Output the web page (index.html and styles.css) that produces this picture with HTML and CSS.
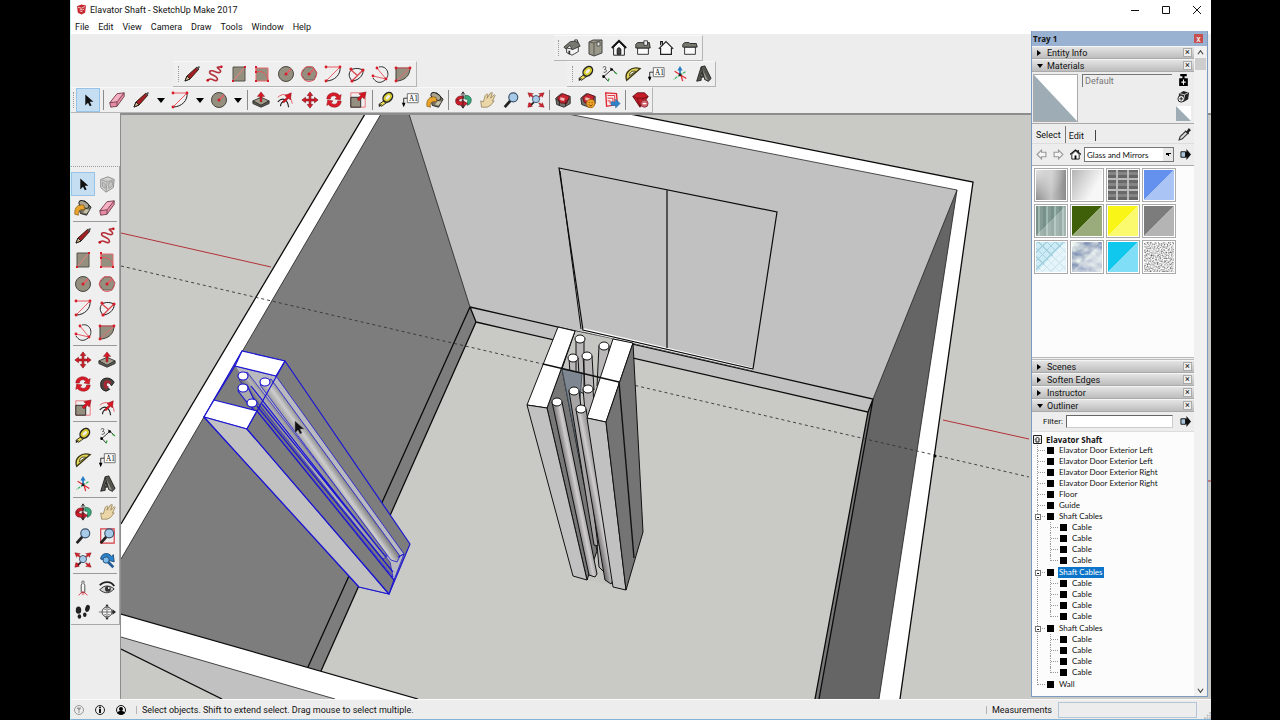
FILE: index.html
```html
<!DOCTYPE html>
<html lang="en">
<head>
<meta charset="utf-8">
<title>Elavator Shaft - SketchUp Make 2017</title>
<link rel="stylesheet" href="styles.css">
</head>
<body>
<svg class="sprite" aria-hidden="true">
  <symbol id="select" viewBox="0 0 20 20"><path d="M7 4v12l3-3 2 4 2-1-2-4h4z" fill="#111"/></symbol>
  <symbol id="eraser" viewBox="0 0 20 20"><path d="M2 13 10 3l8-1v4l-8 11-7 1z" fill="#e58ca4" stroke="#71404d"/><path d="m2 13 8-1 8-10M10 12v5" fill="none" stroke="#71404d"/><path d="m10 4 6-1-6 8-6 1z" fill="#f5b1c4"/></symbol>
  <symbol id="pencil" viewBox="1 1 18 18"><path d="m3 17 2-5L15 3l2 2L8 15z" fill="#a51e25" stroke="#321" /><path d="m3 17 2-5 3 3z" fill="#d9b98a" stroke="#222"/><path d="m14 4 3-2 1 1-2 3z" fill="#555"/></symbol>
  <symbol id="freehand" viewBox="0 0 20 20"><path d="M2 17c2-3 5-1 7 0s5 0 3-3-8-3-8-6 5-1 8 0 6 0 3-3-4-2 1-3" fill="none" stroke="#b5303a" stroke-width="1.8"/><circle cx="2" cy="17" r="1.5" fill="#c4101c"/><circle cx="17" cy="2" r="1.5" fill="#c4101c"/></symbol>
  <symbol id="rect" viewBox="1 1 18 18"><path d="M4 3h12v14H4z" fill="#948f7e" stroke="#55534a"/><path d="M4 17 16 3" stroke="#ef8080"/><path d="M3 16h2v2H3zM15 2h2v2h-2z" fill="#d91c2a"/></symbol>
  <symbol id="rrect" viewBox="1 1 18 18"><path d="M4 4h12v13H4z" fill="#948f7e" stroke="#e76b70"/><path d="M4 8c6-2 12 2 12 9M4 8V3" fill="none" stroke="#ee5360"/><path d="M3 2h2v2H3zM3 16h2v2H3zM15 16h2v2h-2zM3 7h2v2H3z" fill="#d91c2a"/></symbol>
  <symbol id="circle" viewBox="1 1 18 18"><circle cx="10" cy="10" r="7.5" fill="#948f7e" stroke="#48463d"/><path d="m10 10 5-5" stroke="#ee5964" stroke-width="1.5"/><circle cx="10" cy="10" r="1.5" fill="#d91c2a"/></symbol>
  <symbol id="polygon" viewBox="1 1 18 18"><path d="m7 3 7 0 4 6-3 7H6L2 10z" fill="#948f7e" stroke="#6b5b52"/><circle cx="10" cy="10" r="7.5" fill="none" stroke="#e05a62"/><path d="m10 10 5-5" stroke="#ee5964" stroke-width="1.5"/><circle cx="10" cy="10" r="1.5" fill="#d91c2a"/></symbol>
  <symbol id="arc" viewBox="1 1 18 18"><path d="M17 3c1 7-5 14-14 14" fill="none" stroke="#222"/><path d="M3 3h14L3 17" fill="none" stroke="#ea5a64"/><g fill="#d91c2a"><circle cx="3" cy="3" r="1.4"/><circle cx="17" cy="3" r="1.4"/><circle cx="3" cy="17" r="1.4"/></g></symbol>
  <symbol id="arc2" viewBox="1 1 18 18"><path d="M6 17C-1 9 6 1 17 6" fill="none" stroke="#222"/><path d="M6 17 17 6M5 6l7 6" fill="none" stroke="#d94751" stroke-width="1.4"/><path d="M17 6c1 6-6 11-11 11" fill="none" stroke="#222"/><g fill="#d91c2a"><circle cx="6" cy="17" r="1.6"/><circle cx="17" cy="6" r="1.6"/><circle cx="5" cy="5" r="1.6"/></g></symbol>
  <symbol id="arc3" viewBox="1 1 18 18"><path d="M9 3c8-2 12 8 6 13S5 17 3 14" fill="none" stroke="#333"/><path d="M7 4 16 15 3 12" fill="none" stroke="#e56069"/><g fill="#d91c2a"><circle cx="7" cy="4" r="1.4"/><circle cx="16" cy="15" r="1.4"/><circle cx="3" cy="12" r="1.4"/></g></symbol>
  <symbol id="pie" viewBox="1 1 18 18"><path d="M3 4h14c0 8-6 13-14 13z" fill="#948f7e" stroke="#413e36"/><path d="M3 4h14L3 17" fill="none" stroke="#ed6a73"/><g fill="#d91c2a"><circle cx="3" cy="4" r="1.4"/><circle cx="17" cy="4" r="1.4"/><circle cx="3" cy="17" r="1.4"/></g></symbol>
  <symbol id="pushpull" viewBox="0 0 20 20"><path d="m1 11 9-4 9 4-9 5z" fill="#a19c89" stroke="#333"/><path d="M1 11v3l9 4 9-4v-3l-9 5z" fill="#5c594d" stroke="#333"/><path d="M9 12V6H6l4-5 4 5h-3v6z" fill="#dc1825" stroke="#7d0b12" stroke-width=".5"/></symbol>
  <symbol id="offset" viewBox="0 0 20 20"><path d="M2 7C8 1 17 4 18 14" fill="none" stroke="#e5515b"/><path d="M2 12c6-6 11-2 12 6M5 17c0-3 2-5 4-6" fill="none" stroke="#222" stroke-width="1.3"/><path d="m7 12 5-5-2-2 7-3-1 8-2-2-5 5z" fill="#d71925" stroke="#800a13" stroke-width=".5"/></symbol>
  <symbol id="move" viewBox="0 0 20 20"><path d="m10 1 3 4h-2v4h4V7l4 3-4 3v-2h-4v4h2l-3 4-3-4h2v-4H5v2l-4-3 4-3v2h4V5H7z" fill="#d91b27" stroke="#7d1319" stroke-width=".7"/></symbol>
  <symbol id="rotate" viewBox="0 0 20 20"><path d="M2 9c0-8 11-9 14-4l2-1-1 6-6-1 2-2C11 4 6 5 6 9zM18 11c0 8-11 9-14 4l-2 1 1-6 6 1-2 2c2 3 7 2 7-2z" fill="#d91b27" stroke="#861019" stroke-width=".5"/></symbol>
  <symbol id="scale" viewBox="0 0 20 20"><path d="M2 2h16v16H2z" fill="none" stroke="#eb7078"/><path d="M2 7h11v11H2z" fill="#948f7e" stroke="#222"/><path d="m9 9 4-4-2-2 8-2-2 8-2-2-4 4z" fill="#d61723" stroke="#760d12" stroke-width=".5"/></symbol>
  <symbol id="follow" viewBox="0 0 20 20"><path d="M3 11C2 2 14 1 18 8l-3 4c-3-5-6-4-6 0l4 4-4 2c-4-1-6-3-6-7z" fill="#494642" stroke="#1c1a19"/><path d="M6 11c0-6 6-7 9-2l-2 1c-3-3-4-1-3 2l2 1-4 3z" fill="#a72733"/></symbol>
  <symbol id="tape" viewBox="0 0 20 20"><path d="m10 9-8 6 3 2 7-5" fill="#f0df52" stroke="#222"/><ellipse cx="12" cy="7" rx="6" ry="4.5" transform="rotate(-45 12 7)" fill="#d8cb30" stroke="#232323" stroke-width="1.6"/><ellipse cx="12" cy="7" rx="3" ry="1.6" transform="rotate(-45 12 7)" fill="#eee"/><path d="M2 15v3l4-3" fill="#222"/></symbol>
  <symbol id="dimension" viewBox="0 0 20 20"><path d="m4 13 9-8M3 11l6 7M11 3l7 6" stroke="#222" fill="none"/><path d="m10 15-1 3M16 8l3 2" stroke="#38a845" stroke-width="1.5"/><path d="M3 3c3-3 5 0 2 2 4 0 2 4-1 3" fill="none" stroke="#444"/><circle cx="4" cy="13" r="1.5"/><circle cx="13" cy="5" r="1.5"/></symbol>
  <symbol id="protractor" viewBox="0 0 20 20"><path d="M3 17C0 8 8 1 18 4z" fill="#e2d657" stroke="#3c3817" stroke-width="1.5"/><path d="M6 12c0-4 3-6 7-5z" fill="#f3f3ed" stroke="#3c3817"/></symbol>
  <symbol id="axes" viewBox="0 0 20 20"><path d="M10 12V4" stroke="#287fc7" stroke-width="2"/><path d="m7 6 3-5 3 5z" fill="#287fc7"/><path d="m10 11 7-4M10 11l-7 5" stroke="#3ab369" stroke-width="1.400" stroke-dasharray="3 1"/><path d="m4 7 13 8M11 11l2 7" stroke="#df2b38" stroke-width="1.4"/><circle cx="10" cy="11" r="1.5" fill="#222"/></symbol>
  <symbol id="text3d" viewBox="0 0 20 20"><path d="m8 2 4-1 7 14-3 3-4-2-1-3-3 1v3l-5 1z" fill="#555650" stroke="#1f201e"/><path d="m8 2 4 14 4 2M9 8l1 4-3 1z" fill="#a1a195" stroke="#282828"/></symbol>
  <symbol id="paint" viewBox="0 0 20 20"><path d="M5 8 12 2l7 7-5 9-7-2z" fill="#777262" stroke="#222"/><ellipse cx="11" cy="6" rx="6" ry="3.3" transform="rotate(30 11 6)" fill="#a9a490" stroke="#222"/><path d="M11 7C4 5 0 10 1 17l4 1c-1-5 2-7 7-6z" fill="#e9a52b" stroke="#80500b" stroke-width=".7"/><path d="m13 11 4 1-3 4-4-1z" fill="#c5c1a6"/></symbol>
  <symbol id="component" viewBox="0 0 20 20"><path d="m3 5 8-3 7 3-1 9-8 5-6-5z" fill="#d4d4d2" stroke="#888"/><path d="m3 5 7 3 8-3M10 8l-1 11M5 8l3 2v5l-3-2zM12 9l4-2v5l-4 3z" fill="#c9c9c9" stroke="#999"/></symbol>
  <symbol id="orbit" viewBox="0 0 20 20"><path d="M2 10c1-5 7-5 9-4l-1 3c-4-1-5 1-5 3z" fill="#d01d2b" stroke="#5e1016" stroke-width=".7"/><path d="M2 10c-1 5 3 6 7 6v2l6-4-6-4v2c-3 0-4-1-4-2z" fill="#d01d2b" stroke="#5e1016" stroke-width=".7"/><path d="M12 5c6-1 9 4 6 9l-3 2v-4c1-2 0-3-3-3z" fill="#35aa7b" stroke="#164d3a" stroke-width=".7"/><path d="M10 1v18M8 4l2-3 2 3M8 16l2 3 2-3" fill="none" stroke="#252525"/></symbol>
  <symbol id="pan" viewBox="0 0 20 20"><path d="m3 11 3 1 2-7 2-2 1 1-1 4 4-6 2 0-2 6 4-4 1 1-3 6 2 0-4 5-4 2H4z" fill="#ead6a7" stroke="#8b784f" stroke-width=".8"/></symbol>
  <symbol id="zoom" viewBox="0 0 20 20"><path d="m3 18 7-8" stroke="#222" stroke-width="3"/><circle cx="12.500" cy="7" r="5" fill="#a6cae8" stroke="#3e546b" stroke-width="1.3"/></symbol>
  <symbol id="zoomwin" viewBox="0 0 20 20"><path d="M3 2h15v16H3z" fill="none" stroke="#d73c47" stroke-width="1.300"/><path d="m3 18 7-8" stroke="#222" stroke-width="3"/><circle cx="12.500" cy="7" r="5" fill="#a6cae8" stroke="#3e546b" stroke-width="1.3"/></symbol>
  <symbol id="extents" viewBox="0 0 20 20"><path d="m3 17 5-5" stroke="#222" stroke-width="2"/><circle cx="10" cy="9" r="4" fill="#a6cae8" stroke="#3e546b"/><path d="m1 2 6 1-2 1 2 2-1 1-2-2-1 2zM19 2l-6 1 2 1-2 2 1 1 2-2 1 2zM1 18l5-1-2-2 1-1-3-1zM19 18l-6-1 2-1-2-2 1-1 2 2 1-2z" fill="#d5202a" stroke="#841016" stroke-width=".5"/></symbol>
  <symbol id="previous" viewBox="0 0 20 20"><path d="M3 9c0-7 9-8 12-3l2-2 1 8-8-2 2-2C9 5 7 7 8 10z" fill="#2984d0" stroke="#214a70"/><circle cx="9" cy="10" r="3.500" fill="#7dbbec" stroke="#214a70"/><path d="m11 12 6 6" stroke="#245b96" stroke-width="3"/></symbol>
  <symbol id="camera" viewBox="0 0 20 20"><path d="M8 15V7l1-2c-1-4 3-4 2 0l1 2v8z" fill="#f6f6f6" stroke="#444"/><path d="m5 18 5-4 5 4M10 14v4" fill="none" stroke="#dc3341"/></symbol>
  <symbol id="eye" viewBox="0 0 20 20"><path d="M2 7c4-5 13-5 16 1" fill="none" stroke="#222" stroke-width="2"/><path d="M2 12c5-6 11-5 16-1-5 5-10 6-16 1z" fill="#d2d2d2" stroke="#222"/><circle cx="11" cy="11" r="3.2" fill="#333"/><circle cx="12" cy="10" r="1" fill="#fff"/></symbol>
  <symbol id="walk" viewBox="0 0 20 20"><g fill="#222"><ellipse cx="5" cy="8" rx="3" ry="4"/><ellipse cx="6" cy="15" rx="2" ry="2.500"/><ellipse cx="15" cy="6" rx="2.500" ry="4" transform="rotate(15 15 6)"/><ellipse cx="12" cy="13" rx="2" ry="2.500"/></g></symbol>
  <symbol id="section" viewBox="0 0 20 20"><circle cx="10" cy="10" r="5.500" fill="#f5f5f5" stroke="#333"/><path d="M1 10h16M10 5v11M7 7h2M11 7h2M7 13h2M11 13h2" stroke="#666"/><path d="m16 7 4 3-4 3zM8 4l2-3 2 3zM8 16l2 3 2-3z" fill="#222"/></symbol>
  <symbol id="warehouse" viewBox="0 0 20 20"><path d="m2 8 6-5 10 3v8l-7 4-8-3z" fill="#73716a" stroke="#2b2929"/><path d="m4 7 6-4 7 3-3 8-8-1z" fill="#c52632" stroke="#701018"/><path d="m7 7 5 1-1 3-4-1z" fill="#f1bbb9"/><path d="m2 9 4 2v5M17 9l-4 3v5" fill="none" stroke="#222"/></symbol>
  <symbol id="share" viewBox="0 0 20 20"><path d="m2 8 6-5 10 3v8l-7 4-8-3z" fill="#73716a" stroke="#2b2929"/><path d="m4 7 6-4 7 3-3 8-8-1z" fill="#c52632" stroke="#701018"/><path d="m7 7 5 1-1 3-4-1z" fill="#f1bbb9"/><circle cx="13" cy="14" r="4.500" fill="#f3a52a" stroke="#a86411"/><path d="M11 13h1M14 13h1M11 15c1 2 3 2 4 0" stroke="#573508" fill="none"/></symbol>
  <symbol id="layout" viewBox="0 0 20 20"><path d="m3 2 12 1 1 12-12 2z" fill="#faeaea" stroke="#db2834" stroke-width="1.500"/><path d="M5 5h8v7M5 8h6v6M5 11h3v3" fill="none" stroke="#db2834"/><path d="M9 12h5V9l5 5-5 5v-3H9z" fill="#2d84ca" stroke="#205a8b" stroke-width=".5"/></symbol>
  <symbol id="ruby" viewBox="0 0 20 20"><path d="m2 6 5-4h8l4 4-5 8-4 4z" fill="#c61c28" stroke="#5d1116"/><path d="m2 6 5 2h7l5-2M7 8l3 9 4-9" fill="none" stroke="#731019"/><circle cx="15" cy="14" r="4" fill="#d5636d" stroke="#8d3039"/><path d="M13 14h4" stroke="#fff" stroke-width="1.500"/></symbol>
  <symbol id="iso" viewBox="0 0 20 20"><path d="m4 10 5 1 8-4v7l-7 4-6-3z" fill="#f5f5f5" stroke="#333"/><path d="m1 9 7-6 8-1 3 6-9 4-2-5-5 4z" fill="#77786f" stroke="#333"/><path d="M6 13h2v4H6z" fill="#333"/><path d="M13 2V1h3v3z" fill="#ddd" stroke="#333"/></symbol>
  <symbol id="top" viewBox="1 1 18 18"><path d="m4 4 4-2h9v13l-8 3-5-2z" fill="#999889" stroke="#444"/><path d="m4 4 5 1 8-3M9 5v12" fill="none" stroke="#5a594f"/><path d="M12 4h3v4h-3z" fill="#e7e7df" stroke="#555"/></symbol>
  <symbol id="front" viewBox="0 0 20 20"><path d="M4 9v9h12V9l-6-6z" fill="#f7f7f7" stroke="#111"/><path d="m2 10 8-8 8 8" fill="none" stroke="#111" stroke-width="2"/><path d="M8 17v-5c0-3 4-3 4 0v5z" fill="#444" stroke="#111"/></symbol>
  <symbol id="right" viewBox="0 0 20 20"><path d="M4 10h12v7H4z" fill="#fafafa" stroke="#222"/><path d="m2 6 2-2h13l1 6H2z" fill="#77786f" stroke="#222"/><path d="M11 2h4v5h-4z" fill="#eee" stroke="#333"/></symbol>
  <symbol id="back" viewBox="0 0 20 20"><path d="M4 9v8h12V9l-6-6z" fill="#fafafa"/><path d="m2 11 8-8 8 8M4 10v7h12v-7M4 7V3h2v3" fill="none" stroke="#222" stroke-width="1.300"/></symbol>
  <symbol id="left" viewBox="0 0 20 20"><path d="M4 9h12v8H4z" fill="#fafafa" stroke="#222"/><path d="m2 6 2-2h5l1 1h7l1 4H2z" fill="#77786f" stroke="#222"/></symbol>
  <symbol id="export" viewBox="0 0 12 12"><path d="M4 3h3V0l5 6-5 6V9H4z" fill="#111"/><path d="M1 3h5v6H1z" fill="#a9c4dd" stroke="#111"/></symbol>
</svg>

<div class="window">
  <header class="titlebar">
    <svg class="logo" viewBox="0 0 10 11"><path d="m0 2 5-2 5 1-1 8-4 2-4-2z" fill="#c4262e"/><path d="m1 3 4 1 4-2M3 5l3 1 2-1M3 7l3 1" fill="none" stroke="#fff" stroke-width=".8"/></svg>
    <h1>Elavator Shaft - SketchUp Make 2017</h1>
    <div class="controls">
      <button aria-label="Minimize"><svg viewBox="0 0 8 8"><path d="M0 4.500h8" stroke="#111"/></svg></button>
      <button aria-label="Maximize"><svg viewBox="0 0 8 8"><path d="M.5.5h7v7h-7z" fill="none" stroke="#111"/></svg></button>
      <button aria-label="Close"><svg viewBox="0 0 8 8"><path d="m0 0 8 8M8 0 0 8" stroke="#111"/></svg></button>
    </div>
  </header>
  <nav class="menu">
    <button>File</button><button>Edit</button><button>View</button><button>Camera</button><button>Draw</button><button>Tools</button><button>Window</button><button>Help</button>
  </nav>

  <div class="dock">
    <div class="dock-row">
      <div class="bar bar-views">
        <button aria-label="Iso"><svg><use href="#iso"/></svg></button><button aria-label="Top"><svg><use href="#top"/></svg></button><button aria-label="Front"><svg><use href="#front"/></svg></button><button aria-label="Right"><svg><use href="#right"/></svg></button><button aria-label="Back"><svg><use href="#back"/></svg></button><button aria-label="Left"><svg><use href="#left"/></svg></button>
      </div>
    </div>
    <div class="dock-row">
      <div class="bar bar-draw">
        <button aria-label="Line"><svg><use href="#pencil"/></svg></button><button aria-label="Freehand"><svg><use href="#freehand"/></svg></button><button aria-label="Rectangle"><svg><use href="#rect"/></svg></button><button aria-label="Rotated rectangle"><svg><use href="#rrect"/></svg></button><button aria-label="Circle"><svg><use href="#circle"/></svg></button><button aria-label="Polygon"><svg><use href="#polygon"/></svg></button><button aria-label="Arc"><svg><use href="#arc"/></svg></button><button aria-label="2 point arc"><svg><use href="#arc2"/></svg></button><button aria-label="3 point arc"><svg><use href="#arc3"/></svg></button><button aria-label="Pie"><svg><use href="#pie"/></svg></button>
      </div>
      <div class="bar bar-construct">
        <button aria-label="Tape measure"><svg><use href="#tape"/></svg></button><button aria-label="Dimension"><svg><use href="#dimension"/></svg></button><button aria-label="Protractor"><svg><use href="#protractor"/></svg></button><button aria-label="Text"><svg viewBox="0 0 20 20"><path d="M7 3h12v10H7z" fill="#fff" stroke="#666"/><path d="M7 8H3v8" fill="none" stroke="#222"/><path d="M1 13h4l-2 5z"/><text x="9" y="11" class="tag">A1</text></svg></button><button aria-label="Axes"><svg><use href="#axes"/></svg></button><button aria-label="3D text"><svg><use href="#text3d"/></svg></button>
      </div>
    </div>
    <div class="dock-row">
      <div class="bar bar-main">
        <button class="active" aria-label="Select"><svg><use href="#select"/></svg></button><i class="vsep"></i>
        <button aria-label="Eraser"><svg><use href="#eraser"/></svg></button><button aria-label="Line"><svg><use href="#pencil"/></svg></button><button class="drop" aria-label="Line tools"></button><button aria-label="Arc"><svg><use href="#arc"/></svg></button><button class="drop" aria-label="Arc tools"></button><button aria-label="Circle"><svg><use href="#circle"/></svg></button><button class="drop" aria-label="Shape tools"></button><i class="vsep"></i>
        <button aria-label="Push/Pull"><svg><use href="#pushpull"/></svg></button><button aria-label="Offset"><svg><use href="#offset"/></svg></button><button aria-label="Move"><svg><use href="#move"/></svg></button><button aria-label="Rotate"><svg><use href="#rotate"/></svg></button><button aria-label="Scale"><svg><use href="#scale"/></svg></button><i class="vsep"></i>
        <button aria-label="Tape measure"><svg><use href="#tape"/></svg></button><button aria-label="Text"><svg viewBox="0 0 20 20"><path d="M7 3h12v10H7z" fill="#fff" stroke="#666"/><path d="M7 8H3v8" fill="none" stroke="#222"/><path d="M1 13h4l-2 5z"/><text x="9" y="11" class="tag">A1</text></svg></button><button aria-label="Paint bucket"><svg><use href="#paint"/></svg></button><i class="vsep"></i>
        <button aria-label="Orbit"><svg><use href="#orbit"/></svg></button><button aria-label="Pan"><svg><use href="#pan"/></svg></button><button aria-label="Zoom"><svg><use href="#zoom"/></svg></button><button aria-label="Zoom extents"><svg><use href="#extents"/></svg></button><i class="vsep"></i>
        <button aria-label="3D Warehouse"><svg><use href="#warehouse"/></svg></button><button aria-label="Share model"><svg><use href="#share"/></svg></button><button aria-label="Send to LayOut"><svg><use href="#layout"/></svg></button><i class="vsep"></i>
        <button aria-label="Extension Warehouse"><svg><use href="#ruby"/></svg></button>
      </div>
    </div>
  </div>

  <div class="work">
    <aside class="side">
      <div class="palette">
        <button class="active" aria-label="Select"><svg><use href="#select"/></svg></button><button aria-label="Make component"><svg><use href="#component"/></svg></button>
        <button aria-label="Paint bucket"><svg><use href="#paint"/></svg></button><button aria-label="Eraser"><svg><use href="#eraser"/></svg></button><i class="hsep"></i>
        <button aria-label="Line"><svg><use href="#pencil"/></svg></button><button aria-label="Freehand"><svg><use href="#freehand"/></svg></button>
        <button aria-label="Rectangle"><svg><use href="#rect"/></svg></button><button aria-label="Rotated rectangle"><svg><use href="#rrect"/></svg></button>
        <button aria-label="Circle"><svg><use href="#circle"/></svg></button><button aria-label="Polygon"><svg><use href="#polygon"/></svg></button>
        <button aria-label="Arc"><svg><use href="#arc"/></svg></button><button aria-label="2 point arc"><svg><use href="#arc2"/></svg></button>
        <button aria-label="3 point arc"><svg><use href="#arc3"/></svg></button><button aria-label="Pie"><svg><use href="#pie"/></svg></button><i class="hsep"></i>
        <button aria-label="Move"><svg><use href="#move"/></svg></button><button aria-label="Push/Pull"><svg><use href="#pushpull"/></svg></button>
        <button aria-label="Rotate"><svg><use href="#rotate"/></svg></button><button aria-label="Follow me"><svg><use href="#follow"/></svg></button>
        <button aria-label="Scale"><svg><use href="#scale"/></svg></button><button aria-label="Offset"><svg><use href="#offset"/></svg></button><i class="hsep"></i>
        <button aria-label="Tape measure"><svg><use href="#tape"/></svg></button><button aria-label="Dimension"><svg><use href="#dimension"/></svg></button>
        <button aria-label="Protractor"><svg><use href="#protractor"/></svg></button><button aria-label="Text"><svg viewBox="0 0 20 20"><path d="M7 3h12v10H7z" fill="#fff" stroke="#666"/><path d="M7 8H3v8" fill="none" stroke="#222"/><path d="M1 13h4l-2 5z"/><text x="9" y="11" class="tag">A1</text></svg></button>
        <button aria-label="Axes"><svg><use href="#axes"/></svg></button><button aria-label="3D text"><svg><use href="#text3d"/></svg></button><i class="hsep"></i>
        <button aria-label="Orbit"><svg><use href="#orbit"/></svg></button><button aria-label="Pan"><svg><use href="#pan"/></svg></button>
        <button aria-label="Zoom"><svg><use href="#zoom"/></svg></button><button aria-label="Zoom window"><svg><use href="#zoomwin"/></svg></button>
        <button aria-label="Zoom extents"><svg><use href="#extents"/></svg></button><button aria-label="Previous"><svg><use href="#previous"/></svg></button><i class="hsep"></i>
        <button aria-label="Position camera"><svg><use href="#camera"/></svg></button><button aria-label="Look around"><svg><use href="#eye"/></svg></button>
        <button aria-label="Walk"><svg><use href="#walk"/></svg></button><button aria-label="Section plane"><svg><use href="#section"/></svg></button>
      </div>
    </aside>
    <main class="canvas">
      <svg class="model" viewBox="121 115 1090 584" preserveAspectRatio="xMinYMin slice" role="img" aria-label="Elevator shaft model">
        <defs>
          <linearGradient id="tube"><stop offset="0" stop-color="#7a7878"/><stop offset=".6" stop-color="#cfcdcd"/><stop offset="1" stop-color="#a3a1a1"/></linearGradient>
          <linearGradient id="tubeA" href="#tube" gradientUnits="userSpaceOnUse" x1="570" y1="490" x2="580" y2="488"/>
          <linearGradient id="tubeB" href="#tube" gradientUnits="userSpaceOnUse" x1="590" y1="497" x2="600" y2="495"/>
          <linearGradient id="tubeC" gradientUnits="userSpaceOnUse" x1="318" y1="471" x2="335" y2="459"><stop offset="0" stop-color="#8a8a8c"/><stop offset=".45" stop-color="#cdcdcd"/><stop offset="1" stop-color="#5c5c5e"/></linearGradient>
          <linearGradient id="tubeD" gradientUnits="userSpaceOnUse" x1="306" y1="474" x2="321" y2="463"><stop offset="0" stop-color="#4f4f55"/><stop offset=".5" stop-color="#b5b5b8"/><stop offset="1" stop-color="#77777b"/></linearGradient>
        </defs>
        <path d="M121 233 271 267M943 420 1029 439M1208 481h3" stroke="#b23238" fill="none"/>
        <!-- walls -->
        <path d="M409 114H568L957 190 873 399 868 412 476 322 470 307z" fill="#c1c1c1"/>
        <path d="M568 114H630L973 182 900 699H879L957 190z" fill="#fff"/>
        <path d="M957 190 873 399 868 412 815 699H879z" fill="#656565"/>
        <path d="M873 399 868 412 815 699H819z" fill="#777"/>
        <path d="M365 114H381L121 559V524z" fill="#fff"/>
        <path d="M381 114H409L470 307 476 322 321 671 121 614V559z" fill="#7d7d7d"/>
        <path d="M121 614 418 699H335L121 637z" fill="#fff"/>
        <path d="M121 637 335 699H222L121 649z" fill="#c1c1c1"/>
        <g fill="none" stroke="#0b0b0b" stroke-width="1.300">
          <path d="M365 114 121 524M630 114 973 182 900 699M470 307 308 667M476 322 321 671M121 614 418 699M121 649 222 699"/>
          <path d="M470 307 873 399 819 699M476 322 868 412 815 699M470 307 476 322M873 399 868 412"/>
        </g>
        <path d="M381 114 121 559M568 114 957 190 879 699M957 190 873 399M409 114 470 307M121 637 335 699" fill="none" stroke="#222" stroke-width=".8"/>
        <!-- doors -->
        <path d="m583 332 170 39 1-3L583 328z" fill="#fff"/>
        <path d="m583 332 170 39" stroke="#333" stroke-width=".8"/>
        <path d="M559 168 777 212 753 369 583 330zM667 190V348" fill="none" stroke="#0b0b0b" stroke-width="1.200"/>
        <path d="m560 171 21 158" stroke="#0b0b0b"/>
        <path d="M121 266 1029 477" stroke="#333" stroke-width=".9" stroke-dasharray="3 3"/>
        <circle cx="935" cy="456" r="1.500"/>
        <!-- centre rails -->
        <g stroke="#111" stroke-width="1">
          <path d="M575 331 613 339 606 400 587 418 609 585 587 580 547 408z" fill="#c5c5c2" stroke="none"/>
          <path d="M575 331 547 408 587 580 597 551 562 369z" fill="#777"/>
          <path d="M576 339v50l8 5V339zM599 346l-2 40 10 3 2-43zM569 358l2 32 9 2-2-34zM583 356l2 32 9 2-2-34z" fill="#b9b7b7"/>
          <path d="M562 369 582 373 580 400 598 550z" fill="#7e8791" stroke="#46515c"/>
          <path d="M583 389 599 567 604 572 593 389z" fill="#b4b2b2"/>
          <path d="M569 391 594 545 598 546 579 391z" fill="#a6a4a4"/>
          <path d="M552 402 589 575 595 577 597 574 562 402z" fill="url(#tubeA)"/>
          <path d="M576 409 605 580 611 584 614 578 586 409z" fill="url(#tubeB)"/>
          <path d="M558 327 575 331 547 408 527 405z" fill="#fff"/>
          <path d="M527 405 547 408 587 580 573 576z" fill="#c1c1c1"/>
          <path d="M613 339 633 343 606 422 587 418z" fill="#fff"/>
          <path d="M587 418 606 422 626 590 613 587z" fill="#c1c1c1"/>
          <path d="M633 343 643 532 626 590 606 422z" fill="#747474"/>
          <path d="M619 382 634 558M543 364 619 382" fill="none" stroke-width="1.400"/>
          <g fill="#fff"><ellipse cx="580" cy="339" rx="5" ry="4"/><ellipse cx="604" cy="346" rx="5" ry="4"/><ellipse cx="573" cy="358" rx="5" ry="4"/><ellipse cx="587" cy="356" rx="5" ry="4"/><ellipse cx="574" cy="391" rx="5" ry="4"/><ellipse cx="588" cy="389" rx="5" ry="4"/><ellipse cx="557" cy="402" rx="5" ry="4"/><ellipse cx="581" cy="409" rx="5" ry="4"/></g>
        </g>
        <!-- selected rail -->
        <g stroke="#1c16d2" stroke-width="1.200" stroke-linejoin="round">
          <path d="M242 351 285 361 410 544 389 594 359 587 204 417z" fill="#7d7d7d"/>
          <path d="M235 366 276 376 404 554 394 580 257 411z" fill="#b9b9c0" stroke-width=".8"/>
          <path d="M235 366 214 400 257 411 262 404z" fill="#7d7d7d" stroke="none"/>
          <path d="M257 411 262 404 390 562 393 577z" fill="#77777b" stroke-width=".7"/>
          <path d="M247 372 386 551 387 557 383 559 239 380z" fill="url(#tubeD)" stroke-width=".7"/>
          <path d="M251 386 378 547M249 404 392 578M257 406 393 572M262 404 386 557" fill="none"/>
          <path d="M260 385 391 560 397 562 400 556 271 379z" fill="url(#tubeC)" stroke-width=".8"/>
          <path d="M238 391 249 405 255 402 247 385z" fill="#aaa"/>
          <path d="M242 351 285 361 276 376 235 366z" fill="#fff"/>
          <path d="M214 400 257 411 247 429 204 417z" fill="#fff"/>
          <path d="M204 417 247 429 389 594 359 587z" fill="#c1c1c1"/>
          <path d="M247 429 257 411 394 580 389 594z" fill="#7d7d7d"/>
          <path d="M285 361 257 411M235 366 214 400M398 557 404 554" fill="none"/>
          <g fill="#fff"><ellipse cx="243" cy="376" rx="5" ry="4"/><ellipse cx="265" cy="382" rx="5" ry="4"/><ellipse cx="243" cy="388" rx="5" ry="4"/><ellipse cx="252" cy="403" rx="5" ry="4"/></g>
        </g>
        <path d="M295 421v12l3-3 2 4 2-1-2-4h4z" fill="#111" stroke="#777" stroke-width=".5"/>
      </svg>
    </main>
  </div>

  <footer class="status">
    <svg viewBox="0 0 12 12"><circle cx="6" cy="6" r="4.500" fill="none" stroke="#999"/><path d="M4 4h4L6 6zM6 5v4" fill="#999" stroke="#999"/></svg>
    <svg viewBox="0 0 12 12"><circle cx="6" cy="6" r="4.500" fill="none" stroke="#222"/><circle cx="6" cy="3.500" r="1"/><path d="M6 5v4" stroke="#111" stroke-width="2"/></svg>
    <svg viewBox="0 0 12 12"><circle cx="6" cy="6" r="4.500" fill="#eee" stroke="#111"/><circle cx="6" cy="5" r="2"/><path d="M2 9c2-3 6-3 8 0-2 2-6 2-8 0z"/></svg>
    <i class="tick"></i>
    <p>Select objects. Shift to extend select. Drag mouse to select multiple.</p>
    <i class="tick"></i>
    <label for="measure">Measurements</label>
    <input id="measure" type="text">
    <svg class="grip" viewBox="0 0 8 8"><path d="M6 0h2v2H6zM3 3h2v2H3zM6 3h2v2H6zM0 6h2v2H0zM3 6h2v2H3zM6 6h2v2H6z" fill="#bbb"/></svg>
  </footer>

  <section class="tray">
    <header class="tray-title"><h2>Tray 1</h2><button aria-label="Close tray">x</button></header>
    <div class="tray-body">
      <div class="panels">
        <div class="panel-head"><button class="fold">Entity Info</button><button class="shut" aria-label="Close">×</button></div>
        <div class="panel-head"><button class="fold open">Materials</button><button class="shut" aria-label="Close">×</button></div>
        <div class="material-info">
          <svg class="preview" viewBox="0 0 44 46" preserveAspectRatio="none"><path d="M0 0h44v46H0z" fill="#fff"/><path d="m0 0 44 46H0z" fill="#9eadb5"/></svg>
          <input type="text" value="Default" aria-label="Material name">
          <div class="mat-tools">
            <button aria-label="Secondary pane"><svg viewBox="0 0 12 12"><path d="M3 0h6v2H3zM5 2h2v2H5zM2 4h8v7H2z"/><path d="M6 5v5M4 7.500h4" stroke="#fff"/></svg></button>
            <button aria-label="Create material"><svg viewBox="0 0 14 14"><path d="m2 4 5-3 6 2-1 7-5 3-5-3z" fill="#222"/><path d="m3 4 5 1 4-2M8 5v5" stroke="#ccc" fill="none"/><circle cx="4.500" cy="9.500" r="3.500" fill="#fff" stroke="#111"/><path d="M2.500 9.500h4M4.500 7.500v4" stroke="#111"/></svg></button>
            <button aria-label="Default material"><svg class="mini" viewBox="0 0 15 15"><path d="M0 0h15v15H0z" fill="#fff"/><path d="m0 0 15 15H0z" fill="#9eadb5"/></svg></button>
          </div>
        </div>
        <div class="tabs"><button class="on">Select</button><button>Edit</button><i></i><button class="pick" aria-label="Sample paint"><svg viewBox="0 0 12 12"><path d="m1 11 1-3 5-5 2 2-5 5z" fill="#ddd" stroke="#333"/><path d="m6 2 2 1 2-3 2 2-2 2 0 2z" fill="#222"/></svg></button></div>
        <div class="browse">
          <button aria-label="Back"><svg viewBox="0 0 10 10"><path d="m1 5 4-4v2h4v4H5v2z" fill="#f5f5f5" stroke="#999"/></svg></button>
          <button aria-label="Forward"><svg viewBox="0 0 10 10"><path d="M9 5 5 1v2H1v4h4v2z" fill="#f5f5f5" stroke="#999"/></svg></button>
          <button aria-label="In model"><svg viewBox="0 0 12 12"><path d="M2 6v5h8V6L6 2z" fill="#fff" stroke="#111"/><path d="m0 6 6-5 6 5M9 3V1" fill="none" stroke="#111" stroke-width="1.300"/><path d="M5 7h2v4H5z"/></svg></button>
          <select aria-label="Collection"><option>Glass and Mirrors</option></select>
          <button aria-label="Details"><svg><use href="#export"/></svg></button>
        </div>
        <div class="swatches">
          <button class="m1" aria-label="Mirror 1"></button><button class="m2" aria-label="Mirror 2"></button><button class="m3" aria-label="Glass block"></button><button class="m4" aria-label="Blue glass"></button>
          <button class="m5" aria-label="Corrugated glass"></button><button class="m6" aria-label="Green glass"></button><button class="m7" aria-label="Yellow glass"></button><button class="m8" aria-label="Gray glass"></button>
          <button class="m9" aria-label="Safety glass"></button>
          <button aria-label="Sky reflection"><svg viewBox="0 0 32 32"><filter id="clouds"><feTurbulence type="fractalNoise" baseFrequency=".07 .09" numOctaves="3" seed="4"/><feColorMatrix values="1.400 0 0 0 -.2 1.400 0 0 0 -.13 .9 0 0 0 .2 0 0 0 0 1"/></filter><path d="M0 0h32v32H0z" filter="url(#clouds)"/><path d="M32 0v32H0z" fill="#fff" opacity=".35"/></svg></button>
          <button class="m11" aria-label="Cyan glass"></button>
          <button aria-label="Obscure glass"><svg viewBox="0 0 32 32"><filter id="grain"><feTurbulence type="fractalNoise" baseFrequency=".7" seed="2"/><feColorMatrix values="2 0 0 0 -.35 2 0 0 0 -.35 2 0 0 0 -.35 0 0 0 0 1"/></filter><path d="M0 0h32v32H0z" filter="url(#grain)"/></svg></button>
        </div>
        <div class="splitter"></div>
        <div class="panel-head"><button class="fold">Scenes</button><button class="shut" aria-label="Close">×</button></div>
        <div class="panel-head"><button class="fold">Soften Edges</button><button class="shut" aria-label="Close">×</button></div>
        <div class="panel-head"><button class="fold">Instructor</button><button class="shut" aria-label="Close">×</button></div>
        <div class="panel-head"><button class="fold open">Outliner</button><button class="shut" aria-label="Close">×</button></div>
        <div class="filter"><label for="filter">Filter:</label><input id="filter" type="text"><button aria-label="Details"><svg><use href="#export"/></svg></button></div>
        <div class="outline">
          <div class="root"><svg viewBox="0 0 9 9"><path d="M.5.5h8v8h-8z" fill="#eee" stroke="#222"/><path d="M2 4.500 4.500 2 7 4.500M3 4v3h3V4" fill="none" stroke="#222"/></svg>Elavator Shaft</div>
          <ul class="tree">
            <li><span>Elavator Door Exterior Left</span></li>
            <li><span>Elavator Door Exterior Left</span></li>
            <li><span>Elavator Door Exterior Right</span></li>
            <li><span>Elavator Door Exterior Right</span></li>
            <li><span>Floor</span></li>
            <li><span>Guide</span></li>
            <li><button class="toggle" aria-label="Collapse"></button><span>Shaft Cables</span><ul><li><span>Cable</span></li><li><span>Cable</span></li><li><span>Cable</span></li><li><span>Cable</span></li></ul></li>
            <li><button class="toggle" aria-label="Collapse"></button><span class="picked">Shaft Cables</span><ul><li><span>Cable</span></li><li><span>Cable</span></li><li><span>Cable</span></li><li><span>Cable</span></li></ul></li>
            <li><button class="toggle" aria-label="Collapse"></button><span>Shaft Cables</span><ul><li><span>Cable</span></li><li><span>Cable</span></li><li><span>Cable</span></li><li><span>Cable</span></li></ul></li>
            <li><span>Wall</span></li>
          </ul>
        </div>
      </div>
      <div class="scroll">
        <button aria-label="Scroll up"><svg viewBox="0 0 8 8"><path d="m1 6 3-4 3 4" fill="none" stroke="#444" stroke-width="1.300"/></svg></button>
        <i class="thumb"></i>
        <button aria-label="Scroll down"><svg viewBox="0 0 8 8"><path d="m1 2 3 4 3-4" fill="none" stroke="#444" stroke-width="1.300"/></svg></button>
      </div>
    </div>
  </section>
</div>
</body>
</html>
```
FILE: styles.css
```css
* { box-sizing: border-box; }
body { margin: 0; background: #000; color: #111; font: 9px/12px Roboto, "Open Sans", sans-serif; }
h1, h2, p, ul { margin: 0; padding: 0; font: inherit; list-style: none; }
button, input, select { margin: 0; padding: 0; border: 0; background: none; color: inherit; font: inherit; }
button { display: grid; place-items: center; }
svg { display: block; }
.sprite { position: absolute; width: 0; height: 0; }
.tag { font: 8px "Liberation Serif", serif; }

.window { position: relative; display: flex; flex-direction: column; height: 100vh; margin: 0 69px 0 70px; background: #ededed; border-left: 1px solid #c9f1f4; border-bottom: 1px solid #7fb2d4; }

.titlebar { display: flex; align-items: center; flex: none; height: 19px; padding-left: 6px; background: #fff; }
.logo { width: 9px; height: 11px; margin-right: 4px; }
.titlebar h1 { flex: 1; }
.controls { display: flex; gap: 3px; }
.controls button { width: 28px; height: 19px; }
.controls svg { width: 8px; height: 8px; }
.menu { display: flex; flex: none; gap: 9px; height: 15px; padding: 1px 0 0 4px; background: #fff; }

.dock { flex: none; padding-top: 1px; }
.dock-row { display: flex; height: 26px; }
.bar { display: flex; align-items: center; justify-content: space-between; height: 26px; border-right: 1px solid #b5b5b5; border-bottom: 1px solid #b5b5b5; border-top: 1px solid #f8f8f8; background: #efefef; }
.bar::before { content: ""; align-self: stretch; margin: 4px 0; border-left: 1px dotted #999; }
.bar button { width: 22px; height: 22px; }
.bar svg, .palette svg { width: 18px; height: 18px; }
.bar-views { width: 149px; margin-left: 483px; padding: 0 1px 0 4px; }
.bar-draw { width: 244px; margin-left: 102px; padding: 0 2px 0 5px; }
.bar-construct { width: 149px; margin-left: 150px; padding: 0 1px 0 5px; }
.bar-main { width: 582px; padding: 0 1px 0 2px; }
.bar button.active, .palette button.active { width: 24px; height: 24px; background: #c6def2; border: 1px solid #98c2e6; }
.bar button.drop { width: 12px; }
.drop::before { content: ""; border: 4px solid transparent; border-top: 5px solid #000; border-bottom: 0; }
.vsep { width: 1px; height: 20px; background: #8a8a8a; }

.work { display: flex; flex: 1; min-height: 0; }
.side { flex: none; width: 49px; padding-top: 53px; }
.palette { display: grid; grid-template-columns: 24px 24px; padding-top: 5px; background: #efefef; border-top: 1px dotted #999; border-right: 1px solid #a8a8a8; border-bottom: 1px solid #a8a8a8; }
.palette button { width: 24px; height: 24px; }
.hsep { grid-column: 1 / -1; height: 4px; margin: 0 2px; background: linear-gradient(#efefef 1px, #999 1px, #999 2px, #efefef 2px); }
.canvas { flex: 1; min-width: 0; overflow: hidden; background: #c9cac5; border-top: 2px solid #8d8d8d; border-left: 1px solid #8d8d8d; }
.model { width: 100%; height: 100%; }

.status { display: flex; align-items: center; flex: none; height: 20px; padding-left: 2px; background: #ededed; border-top: 1px solid #fafafa; }
.status > svg { width: 12px; height: 12px; margin-right: 9px; }
.tick { width: 1px; height: 8px; margin-right: 5px; background: #b5b5b5; }
.status p { flex: 1; }
.status input { width: 139px; height: 16px; margin: 0 7px 0 6px; border: 1px solid #b4c6d6; }
.status .grip { align-self: flex-end; width: 7px; height: 7px; margin: 0; }

.tray { position: absolute; top: 31px; right: 3px; bottom: 22px; display: flex; flex-direction: column; width: 177px; background: #ededed; border: 1px solid #7b9cc0; border-top: 0; }
.tray-title { display: flex; align-items: center; justify-content: space-between; flex: none; height: 15px; padding: 0 4px 0 1px; background: #99b2d1; }
.tray-title h2, .root { font: bold 8px/11px "Open Sans", "Noto Sans", sans-serif; }
.tray-title button { width: 9px; height: 9px; background: #c7504f; color: #fff; line-height: 8px; }
.tray-body { display: flex; flex: 1; min-height: 0; }
.panels { display: flex; flex-direction: column; flex: 1; min-width: 0; }
.panel-head { display: flex; align-items: center; justify-content: space-between; flex: none; height: 13px; padding: 0 2px 0 5px; background: linear-gradient(#e4e4e4, #bdbdbd); border-top: 1px solid #f4f4f4; border-bottom: 1px solid #aaa; }
.fold { display: flex; align-items: center; }
.fold::before { content: ""; width: 0; margin-right: 6px; border: 3px solid transparent; border-left: 4px solid #000; border-right: 0; }
.fold.open::before { margin-right: 4px; border: 3px solid transparent; border-top: 4px solid #000; border-bottom: 0; }
.shut { width: 9px; height: 9px; background: #eee; border: 1px solid #aaa; line-height: 7px; }

.material-info { display: flex; align-items: flex-start; gap: 4px; flex: none; height: 52px; padding: 2px 3px 0 1px; border-bottom: 1px solid #aaa; }
.preview { width: 45px; height: 48px; border: 1px solid #aaa; }
.material-info input { flex: 1; min-width: 0; height: 13px; border-top: 1px solid #777; border-left: 1px solid #777; padding-left: 2px; color: #777; }
.mat-tools { display: grid; gap: 3px; justify-items: center; }
.mat-tools svg { width: 13px; height: 13px; }
.mat-tools .mini { width: 15px; height: 15px; }
.tabs { display: flex; align-items: flex-end; flex: none; height: 20px; padding: 2px 3px 0 0; border-bottom: 1px solid #ddd; }
.tabs button { height: 15px; padding: 0 3px; }
.tabs .on { height: 17px; padding: 0 4px; border-right: 1px solid #777; }
.tabs i { width: 1px; height: 11px; margin: 0 auto 2px 8px; background: #444; }
.tabs .pick { padding: 0; height: 17px; }
.pick svg { width: 13px; height: 13px; }
.browse { display: flex; align-items: center; flex: none; gap: 6px; height: 21px; padding: 0 3px 0 4px; }
.browse svg, .filter svg { width: 11px; height: 11px; }
.browse select { flex: 1; min-width: 0; height: 15px; margin-left: -3px; padding-left: 2px; border: 1px solid #777; font-family: Lato, "Open Sans", sans-serif; font-size: 8px; appearance: none; background: linear-gradient(45deg, transparent 50%, #000 50%) right 5px center / 3px 3px no-repeat, linear-gradient(-45deg, transparent 50%, #000 50%) right 2px center / 3px 3px no-repeat, linear-gradient(#e7e7e7, #e7e7e7) right / 10px 100% no-repeat, #fff; }
.swatches { display: grid; grid-template-columns: repeat(4, 34px); grid-auto-rows: 34px; gap: 2px; flex: none; height: 192px; padding: 2px; background: #fcfcfc; border-top: 1px solid #aaa; }
.swatches button { border: 1px solid #aaa; outline: 1px solid #fff; outline-offset: -2px; overflow: hidden; }
.swatches svg { width: 32px; height: 32px; }
.m1 { background: radial-gradient(circle at 0 0, #e6e6e6, transparent 70%), linear-gradient(90deg, #888, #c4c4c4 50%, #888); }
.m2 { background: linear-gradient(120deg, #b2b2b2, #f7f7f7 70%); }
.m3 { background: repeating-linear-gradient(90deg, transparent 0 9px, #bbb 9px 11px), repeating-linear-gradient(#696969 0 3px, #858585 3px 6px, #666 6px 9px, #bbb 9px 11px); }
.m4 { background: linear-gradient(135deg, #6391ed 50%, #a9c4f5 50%); }
.m5 { background: linear-gradient(135deg, transparent 50%, #ffffff40 50%), repeating-linear-gradient(90deg, #77918a 0 3px, #9fb8b0 3px 5px, #839b94 5px 8px); }
.m6 { background: linear-gradient(135deg, #3f5f08 50%, #9aac7c 50%); }
.m7 { background: linear-gradient(135deg, #f9f516 50%, #fbf96e 50%); }
.m8 { background: linear-gradient(135deg, #7c7c7c 50%, #b4b4b4 50%); }
.m9 { background: linear-gradient(135deg, transparent 50%, #ffffff80 50%), repeating-linear-gradient(45deg, #a5d0de 0 1px, transparent 1px 6px), repeating-linear-gradient(-45deg, #a5d0de 0 1px, transparent 1px 6px), #cdebf6; }
.m11 { background: linear-gradient(135deg, #10c8ee 50%, #80def6 50%); }
.splitter { flex: none; height: 3px; background: #eee; border-top: 1px solid #bbb; border-bottom: 1px solid #bbb; }
.filter { display: flex; align-items: center; flex: none; gap: 3px; height: 19px; padding: 0 3px 0 11px; font-size: 8px; }
.filter input { flex: 1; min-width: 0; height: 13px; margin-right: 4px; background: #fff; border: 1px solid #ccc; border-top-color: #666; border-left-color: #666; }

.outline { flex: 1; min-height: 0; padding: 1px 0 0 1px; overflow: hidden; background: #fcfcfc; border-top: 1px solid #ddd; line-height: 11px; }
.root { display: flex; align-items: center; gap: 4px; height: 12px; }
.root svg { width: 9px; height: 9px; }
.tree { padding-left: 4px; font-family: Lato, "Open Sans", sans-serif; font-size: 8px; }
.tree li { position: relative; padding-left: 11px; border-left: 1px dotted #999; }
.tree li:last-child { border-left-color: transparent; }
.tree li:last-child::after { content: ""; position: absolute; left: -1px; top: 0; height: 6px; border-left: 1px dotted #999; }
.tree li::before { content: ""; position: absolute; left: 0; top: 5px; width: 7px; border-top: 1px dotted #999; }
.tree span { display: inline-flex; align-items: center; height: 11px; padding-right: 1px; vertical-align: top; }
.tree span::before { content: ""; width: 7px; height: 7px; margin: 0 5px 0 -2px; background: #000; }
.tree ul { margin-bottom: 1px; padding-left: 1px; }
.tree .picked { background: linear-gradient(90deg, #fcfcfc 9px, #0d75c9 9px); color: #fff; }
.toggle { position: absolute; left: -3px; top: 3px; z-index: 1; width: 6px; height: 6px; background: #fff; border: 1px solid #777; }
.toggle::before { content: ""; width: 2px; height: 1px; background: #111; }
.scroll { display: flex; flex-direction: column; align-items: center; flex: none; width: 12px; margin-right: 1px; background: #f1f1f1; }
.scroll button { width: 12px; height: 12px; }
.scroll svg { width: 7px; height: 7px; }
.thumb { width: 11px; height: 12px; margin-bottom: auto; background: #cdcdcd; }
```
